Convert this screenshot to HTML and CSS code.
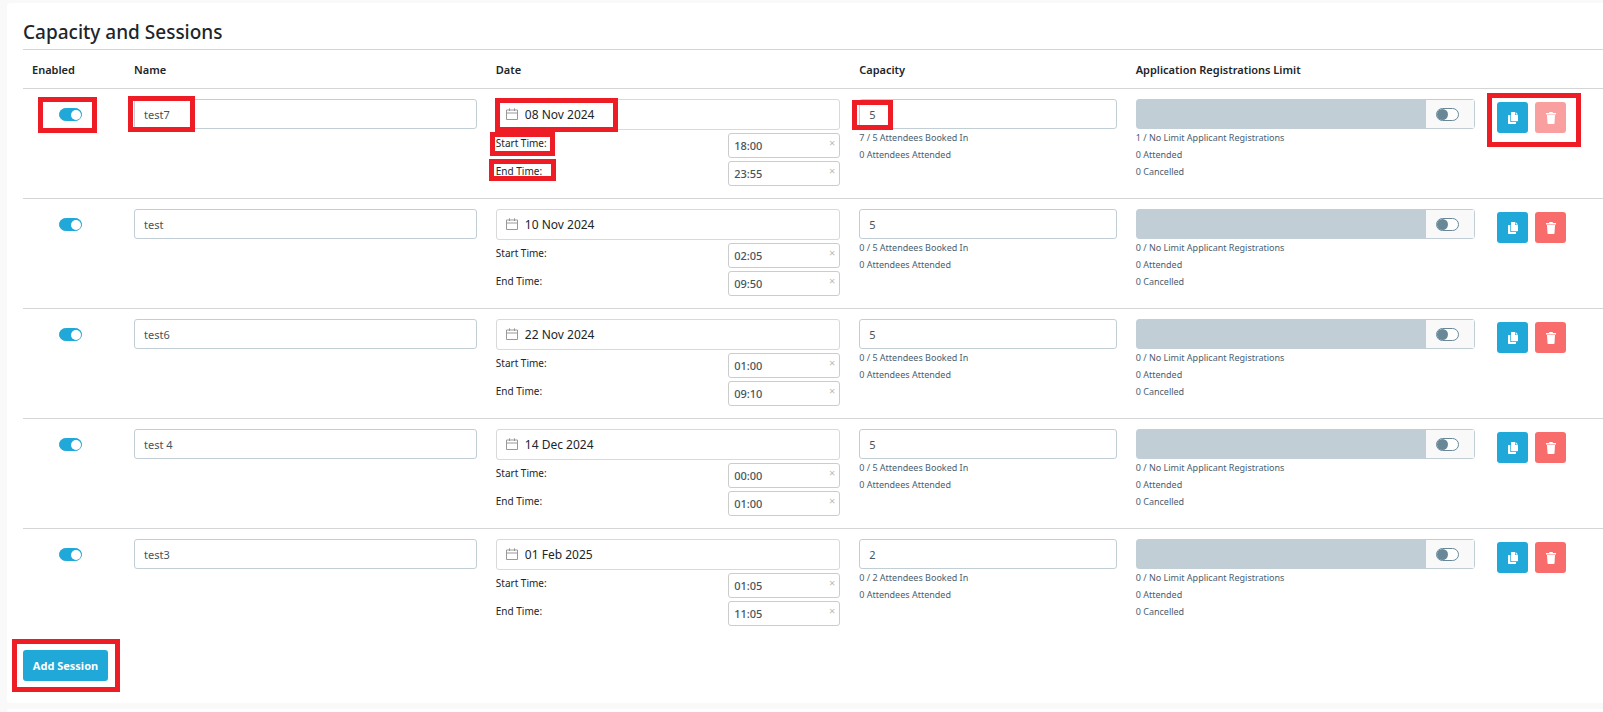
FILE: index.html
```html
<!DOCTYPE html>
<html lang="en">

<head>
    <meta charset="UTF-8">
    <meta name="viewport" content="width=device-width, initial-scale=1.0">
    <title>Capacity and Sessions</title>
    <link rel="stylesheet" href="styles.css">
</head>

<body>
    <!-- Shared icons -->
    <svg class="icon-defs" aria-hidden="true">
        <symbol id="icon-calendar" viewBox="0 0 12 12">
            <path d="M.5 2h11v9.500h-11zM.5 5h11M3.500.300v2.700M8.500.300v2.700" fill="none" stroke="currentColor"/>
        </symbol>
        <symbol id="icon-copy" viewBox="0 0 10 12">
            <path d="M0 3h2.300v7h5.700v1.300q0 .7-.7.700H.7Q0 12 0 11.300z" fill="currentColor"/>
            <path d="M3 .700Q3 0 3.700 0H7v3h3v5.600q0 .7-.7.700H3.700Q3 9.300 3 8.600z" fill="currentColor"/>
            <path d="M7.600 0L10 2.400H7.600z" fill="currentColor"/>
        </symbol>
        <symbol id="icon-trash" viewBox="0 0 10 12">
            <path d="M0 1h3L3.500 0h3L7 1h3v1.500H0zM1 3h8l-.5 8.200q-.1.800-.9.800H2.400q-.8 0-.9-.8z" fill="currentColor"/>
        </symbol>
    </svg>

    <section class="card">
        <h2>Capacity and Sessions</h2>
        <table class="sessions">
            <thead>
                <tr>
                    <th class="col-enabled">Enabled</th>
                    <th class="col-name">Name</th>
                    <th class="col-date">Date</th>
                    <th class="col-capacity">Capacity</th>
                    <th class="col-limit">Application Registrations Limit</th>
                    <th class="col-actions"></th>
                </tr>
            </thead>
            <tbody>
                <tr>
                    <td><div class="switch-cell"><input type="checkbox" class="switch" aria-label="Enabled" checked><span class="mark mark-enabled"></span></div></td>
                    <td><div class="field"><input type="text" class="input" aria-label="Name" value="test7"><span class="mark mark-name"></span></div></td>
                    <td>
                        <div class="date-box"><svg class="calendar"><use href="#icon-calendar"/></svg><input type="text" aria-label="Date" value="08 Nov 2024"><span class="mark mark-date"></span></div>
                        <div class="time-row">
                            <label for="start1">Start Time:<span class="mark mark-start"></span></label>
                            <div class="time-box"><input type="text" id="start1" value="18:00"><button type="button" class="clear" aria-label="Clear">×</button></div>
                        </div>
                        <div class="time-row">
                            <label for="end1">End Time:<span class="mark mark-end"></span></label>
                            <div class="time-box"><input type="text" id="end1" value="23:55"><button type="button" class="clear" aria-label="Clear">×</button></div>
                        </div>
                    </td>
                    <td>
                        <div class="field"><input type="text" class="input" aria-label="Capacity" value="5"><span class="mark mark-capacity"></span></div>
                        <p>7 / 5 Attendees Booked In</p>
                        <p>0 Attendees Attended</p>
                    </td>
                    <td>
                        <div class="limit"><input type="text" class="limit-value" aria-label="Limit" disabled><span class="addon"><input type="checkbox" class="switch" aria-label="Use limit"></span></div>
                        <p>1 / No Limit Applicant Registrations</p>
                        <p>0 Attended</p>
                        <p>0 Cancelled</p>
                    </td>
                    <td>
                        <div class="actions">
                            <button type="button" class="btn btn-icon" aria-label="Copy"><svg><use href="#icon-copy"/></svg></button>
                            <button type="button" class="btn btn-icon btn-danger" aria-label="Delete" disabled><svg><use href="#icon-trash"/></svg></button>
                            <span class="mark mark-actions"></span>
                        </div>
                    </td>
                </tr>
                <tr>
                    <td><div class="switch-cell"><input type="checkbox" class="switch" aria-label="Enabled" checked></div></td>
                    <td><div class="field"><input type="text" class="input" aria-label="Name" value="test"></div></td>
                    <td>
                        <div class="date-box"><svg class="calendar"><use href="#icon-calendar"/></svg><input type="text" aria-label="Date" value="10 Nov 2024"></div>
                        <div class="time-row">
                            <label for="start2">Start Time:</label>
                            <div class="time-box"><input type="text" id="start2" value="02:05"><button type="button" class="clear" aria-label="Clear">×</button></div>
                        </div>
                        <div class="time-row">
                            <label for="end2">End Time:</label>
                            <div class="time-box"><input type="text" id="end2" value="09:50"><button type="button" class="clear" aria-label="Clear">×</button></div>
                        </div>
                    </td>
                    <td>
                        <div class="field"><input type="text" class="input" aria-label="Capacity" value="5"></div>
                        <p>0 / 5 Attendees Booked In</p>
                        <p>0 Attendees Attended</p>
                    </td>
                    <td>
                        <div class="limit"><input type="text" class="limit-value" aria-label="Limit" disabled><span class="addon"><input type="checkbox" class="switch" aria-label="Use limit"></span></div>
                        <p>0 / No Limit Applicant Registrations</p>
                        <p>0 Attended</p>
                        <p>0 Cancelled</p>
                    </td>
                    <td>
                        <div class="actions">
                            <button type="button" class="btn btn-icon" aria-label="Copy"><svg><use href="#icon-copy"/></svg></button>
                            <button type="button" class="btn btn-icon btn-danger" aria-label="Delete"><svg><use href="#icon-trash"/></svg></button>
                        </div>
                    </td>
                </tr>
                <tr>
                    <td><div class="switch-cell"><input type="checkbox" class="switch" aria-label="Enabled" checked></div></td>
                    <td><div class="field"><input type="text" class="input" aria-label="Name" value="test6"></div></td>
                    <td>
                        <div class="date-box"><svg class="calendar"><use href="#icon-calendar"/></svg><input type="text" aria-label="Date" value="22 Nov 2024"></div>
                        <div class="time-row">
                            <label for="start3">Start Time:</label>
                            <div class="time-box"><input type="text" id="start3" value="01:00"><button type="button" class="clear" aria-label="Clear">×</button></div>
                        </div>
                        <div class="time-row">
                            <label for="end3">End Time:</label>
                            <div class="time-box"><input type="text" id="end3" value="09:10"><button type="button" class="clear" aria-label="Clear">×</button></div>
                        </div>
                    </td>
                    <td>
                        <div class="field"><input type="text" class="input" aria-label="Capacity" value="5"></div>
                        <p>0 / 5 Attendees Booked In</p>
                        <p>0 Attendees Attended</p>
                    </td>
                    <td>
                        <div class="limit"><input type="text" class="limit-value" aria-label="Limit" disabled><span class="addon"><input type="checkbox" class="switch" aria-label="Use limit"></span></div>
                        <p>0 / No Limit Applicant Registrations</p>
                        <p>0 Attended</p>
                        <p>0 Cancelled</p>
                    </td>
                    <td>
                        <div class="actions">
                            <button type="button" class="btn btn-icon" aria-label="Copy"><svg><use href="#icon-copy"/></svg></button>
                            <button type="button" class="btn btn-icon btn-danger" aria-label="Delete"><svg><use href="#icon-trash"/></svg></button>
                        </div>
                    </td>
                </tr>
                <tr>
                    <td><div class="switch-cell"><input type="checkbox" class="switch" aria-label="Enabled" checked></div></td>
                    <td><div class="field"><input type="text" class="input" aria-label="Name" value="test 4"></div></td>
                    <td>
                        <div class="date-box"><svg class="calendar"><use href="#icon-calendar"/></svg><input type="text" aria-label="Date" value="14 Dec 2024"></div>
                        <div class="time-row">
                            <label for="start4">Start Time:</label>
                            <div class="time-box"><input type="text" id="start4" value="00:00"><button type="button" class="clear" aria-label="Clear">×</button></div>
                        </div>
                        <div class="time-row">
                            <label for="end4">End Time:</label>
                            <div class="time-box"><input type="text" id="end4" value="01:00"><button type="button" class="clear" aria-label="Clear">×</button></div>
                        </div>
                    </td>
                    <td>
                        <div class="field"><input type="text" class="input" aria-label="Capacity" value="5"></div>
                        <p>0 / 5 Attendees Booked In</p>
                        <p>0 Attendees Attended</p>
                    </td>
                    <td>
                        <div class="limit"><input type="text" class="limit-value" aria-label="Limit" disabled><span class="addon"><input type="checkbox" class="switch" aria-label="Use limit"></span></div>
                        <p>0 / No Limit Applicant Registrations</p>
                        <p>0 Attended</p>
                        <p>0 Cancelled</p>
                    </td>
                    <td>
                        <div class="actions">
                            <button type="button" class="btn btn-icon" aria-label="Copy"><svg><use href="#icon-copy"/></svg></button>
                            <button type="button" class="btn btn-icon btn-danger" aria-label="Delete"><svg><use href="#icon-trash"/></svg></button>
                        </div>
                    </td>
                </tr>
                <tr>
                    <td><div class="switch-cell"><input type="checkbox" class="switch" aria-label="Enabled" checked></div></td>
                    <td><div class="field"><input type="text" class="input" aria-label="Name" value="test3"></div></td>
                    <td>
                        <div class="date-box"><svg class="calendar"><use href="#icon-calendar"/></svg><input type="text" aria-label="Date" value="01 Feb 2025"></div>
                        <div class="time-row">
                            <label for="start5">Start Time:</label>
                            <div class="time-box"><input type="text" id="start5" value="01:05"><button type="button" class="clear" aria-label="Clear">×</button></div>
                        </div>
                        <div class="time-row">
                            <label for="end5">End Time:</label>
                            <div class="time-box"><input type="text" id="end5" value="11:05"><button type="button" class="clear" aria-label="Clear">×</button></div>
                        </div>
                    </td>
                    <td>
                        <div class="field"><input type="text" class="input" aria-label="Capacity" value="2"></div>
                        <p>0 / 2 Attendees Booked In</p>
                        <p>0 Attendees Attended</p>
                    </td>
                    <td>
                        <div class="limit"><input type="text" class="limit-value" aria-label="Limit" disabled><span class="addon"><input type="checkbox" class="switch" aria-label="Use limit"></span></div>
                        <p>0 / No Limit Applicant Registrations</p>
                        <p>0 Attended</p>
                        <p>0 Cancelled</p>
                    </td>
                    <td>
                        <div class="actions">
                            <button type="button" class="btn btn-icon" aria-label="Copy"><svg><use href="#icon-copy"/></svg></button>
                            <button type="button" class="btn btn-icon btn-danger" aria-label="Delete"><svg><use href="#icon-trash"/></svg></button>
                        </div>
                    </td>
                </tr>
            </tbody>
        </table>
        <div class="footer">
            <button type="button" class="btn btn-add">Add Session</button>
            <span class="mark mark-add"></span>
        </div>
    </section>
    <section class="card card-next"></section>
</body>

</html>
```
FILE: styles.css
```css
/* Reset default margin and padding */
* {
    margin: 0;
    padding: 0;
    box-sizing: border-box;
}

body {
    font-family: "Noto Sans", "Open Sans", sans-serif;
    font-size: 11px;
    background-color: #f9f9f9;
    color: #212529;
    padding: 3px 0 0 7px;
    overflow-x: hidden;
}

input,
button {
    font-family: inherit;
    font-size: inherit;
}

.icon-defs {
    display: none;
}

/* Card styles */
.card {
    background-color: #fff;
    border-radius: 4px 0 0 4px;
    padding: 12px 0 22px 16px;
    margin-bottom: 6px;
}

.card-next {
    margin-bottom: 0;
    padding: 0;
    height: 3px;
}

h2 {
    font-size: 19px;
    font-weight: 500;
    line-height: 34px;
}

/* Sessions table */
.sessions {
    width: 100%;
    table-layout: fixed;
    border-collapse: separate;
    border-spacing: 0;
}

.sessions th {
    height: 39px;
    padding: 0 10px 0 9px;
    border-top: 1px solid #d3d5d7;
    text-align: left;
    font-weight: 600;
    white-space: nowrap;
}

.sessions td {
    height: 110px;
    padding: 10px 10px 0 9px;
    border-top: 1px solid #d3d5d7;
    vertical-align: top;
}

.sessions p {
    font-size: 9px;
    line-height: 17px;
    color: #4a6070;
}

.col-enabled {
    width: 102px;
}

.col-name {
    width: 22.9%;
}

.col-date {
    width: 23%;
}

.col-capacity {
    width: 17.5%;
}

.col-actions {
    width: 118px;
}

/* Form fields */
.field {
    position: relative;
}

.input {
    display: block;
    width: 100%;
    height: 30px;
    padding: 0 9px;
    border: 1px solid #c2ced6;
    border-radius: 3px;
    color: #46545e;
}

.date-box {
    position: relative;
    display: flex;
    align-items: center;
    height: 31px;
    padding: 0 9px;
    gap: 7px;
    border: 1px solid #d9d9d9;
    border-radius: 3px;
}

.date-box input {
    flex: 1;
    min-width: 0;
    border: 0;
    font-size: 12px;
    color: #212529;
}

.calendar {
    width: 12px;
    height: 12px;
    margin-bottom: 2px;
    color: #999;
}

.time-row {
    display: flex;
    justify-content: space-between;
    margin-top: 3px;
}

.time-row label {
    position: relative;
    font-size: 10px;
    line-height: 20px;
}

.time-box {
    display: flex;
    width: 112px;
    height: 25px;
    padding: 0 4px 0 5px;
    border: 1px solid #ccc;
    border-radius: 3px;
}

.time-box input {
    flex: 1;
    min-width: 0;
    border: 0;
    font-weight: 500;
    color: #46545e;
}

.clear {
    height: 18px;
    border: 0;
    background: none;
    line-height: 18px;
    color: #bbb;
}

/* Switches */
.switch-cell {
    position: relative;
    padding: 9px 0 0 27px;
}

.switch {
    appearance: none;
    display: flex;
    align-items: center;
    width: 23px;
    height: 13px;
    border: 1px solid #688898;
    border-radius: 7px;
    background-color: #fff;
}

.switch::before {
    content: "";
    width: 11px;
    height: 11px;
    border-radius: 50%;
    background-color: #688898;
}

.switch:checked {
    justify-content: flex-end;
    border-color: #20a8d8;
    background-color: #20a8d8;
}

.switch:checked::before {
    width: 10px;
    height: 10px;
    background-color: #fff;
}

.limit {
    display: flex;
    height: 30px;
    border: 1px solid #c2ced6;
    border-radius: 3px;
}

.limit-value {
    flex: 1;
    min-width: 0;
    border: 0;
    background-color: #c2ced6;
}

.addon {
    display: flex;
    align-items: center;
    width: 48px;
    padding-left: 10px;
    background-color: #f9f9f9;
}

/* Buttons */
.btn {
    display: flex;
    align-items: center;
    justify-content: center;
    height: 31px;
    border: 0;
    border-radius: 3px;
    background-color: #20a8d8;
    color: #fff;
    font-weight: 700;
}

.btn-icon {
    width: 31px;
}

.btn-icon svg {
    width: 10px;
    height: 12px;
}

.btn-danger {
    background-color: #f86c6b;
}

.btn-danger:disabled {
    background-color: #fa9f9f;
}

.btn-add {
    width: 85px;
}

.actions {
    position: relative;
    display: flex;
    gap: 7px;
    padding: 3px 0 0 3px;
}

.footer {
    position: relative;
    display: flex;
    margin-top: 12px;
}

/* Red highlight boxes over the controls */
.mark {
    position: absolute;
    z-index: 1;
    border: 5px solid #ee1c24;
    pointer-events: none;
}

.mark-enabled {
    left: 6px;
    top: -2px;
    width: 59px;
    height: 36px;
}

.mark-name {
    left: -6px;
    top: -3px;
    width: 67px;
    height: 36px;
}

.mark-date {
    left: -2px;
    top: -2px;
    width: 123px;
    height: 34px;
}

.mark-start {
    left: -6px;
    top: -1px;
    width: 65px;
    height: 24px;
}

.mark-end {
    left: -7px;
    top: -2px;
    width: 67px;
    height: 22px;
}

.mark-capacity {
    left: -7px;
    top: 1px;
    width: 41px;
    height: 30px;
}

.mark-actions {
    left: -7px;
    top: -6px;
    width: 94px;
    height: 54px;
}

.mark-add {
    left: -11px;
    top: -11px;
    width: 108px;
    height: 53px;
}
```
